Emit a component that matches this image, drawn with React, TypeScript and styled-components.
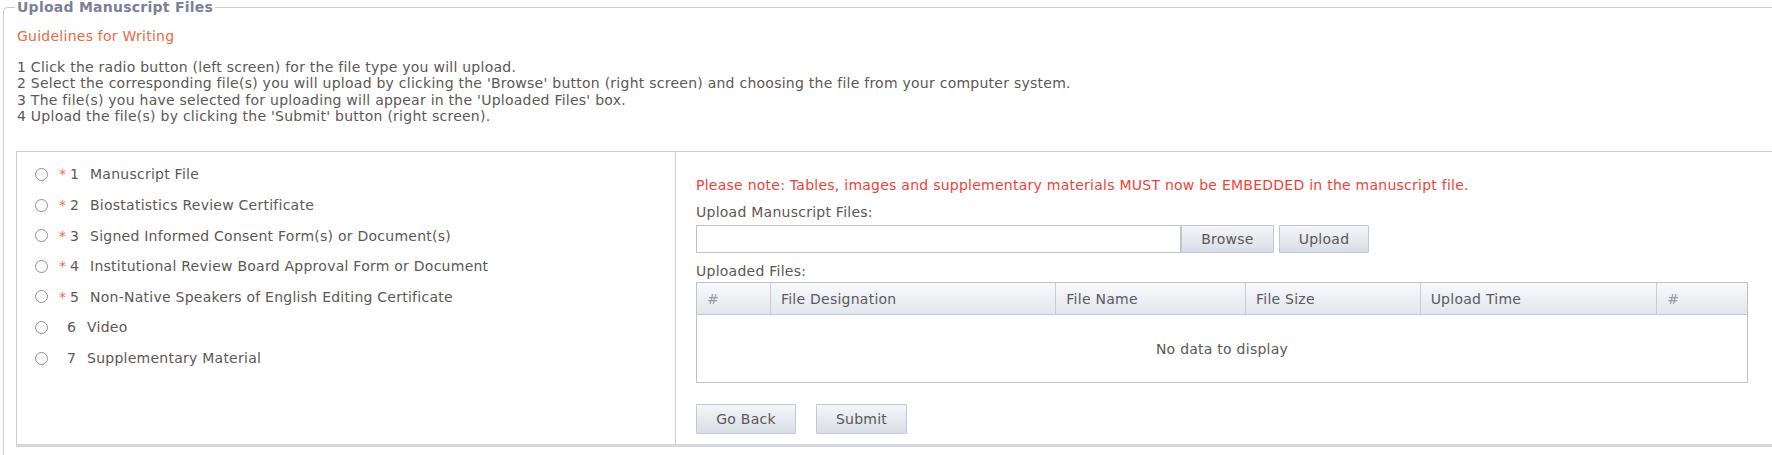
import React from 'react'
import styled, { createGlobalStyle } from 'styled-components'

const GlobalStyle = createGlobalStyle`
	html, body {
		margin: 0;
		padding: 0;
		background: #ffffff;
		overflow: hidden;
	}
	body {
		font-family: 'DejaVu Sans', Verdana, sans-serif;
		font-size: 14px;
		letter-spacing: 0.25px;
		color: #5b5755;
	}
`

const guidelines = [
	"1 Click the radio button (left screen) for the file type you will upload.",
	"2 Select the corresponding file(s) you will upload by clicking the 'Browse' button (right screen) and choosing the file from your computer system.",
	"3 The file(s) you have selected for uploading will appear in the 'Uploaded Files' box.",
	"4 Upload the file(s) by clicking the 'Submit' button (right screen).",
]

const fileTypes = [
	{ num: 1, label: 'Manuscript File', required: true },
	{ num: 2, label: 'Biostatistics Review Certificate', required: true },
	{ num: 3, label: 'Signed Informed Consent Form(s) or Document(s)', required: true },
	{ num: 4, label: 'Institutional Review Board Approval Form or Document', required: true },
	{ num: 5, label: 'Non-Native Speakers of English Editing Certificate', required: true },
	{ num: 6, label: 'Video', required: false },
	{ num: 7, label: 'Supplementary Material', required: false },
]

const columns = [
	{ title: '#', width: 74, muted: true },
	{ title: 'File Designation', width: 286 },
	{ title: 'File Name', width: 190 },
	{ title: 'File Size', width: 175 },
	{ title: 'Upload Time', width: 237 },
	{ title: '#', width: 90, muted: true },
]

export default function App() {
	return (
		<>
			<GlobalStyle />
			<Fieldset>
				<Legend>{'Upload Manuscript Files'}</Legend>
				<Guidelines>
					<GuideTitle>{'Guidelines for Writing'}</GuideTitle>
					<GuideList>
						{guidelines.map((line) => (
							<GuideLine key={line}>{line}</GuideLine>
						))}
					</GuideList>
				</Guidelines>
				<Panel>
					<LeftColumn>
						{fileTypes.map((item) => (
							<RadioRow key={item.num}>
								<Radio />
								<Star required={item.required}>{item.required ? '*' : ''}</Star>
								<Num>{item.num}</Num>
								<span>{item.label}</span>
							</RadioRow>
						))}
					</LeftColumn>
					<RightColumn>
						<Note>{'Please note: Tables, images and supplementary materials MUST now be EMBEDDED in the manuscript file.'}</Note>
						<Label space={5}>{'Upload Manuscript Files:'}</Label>
						<UploadRow>
							<FileInput />
							<Button w={93}>{'Browse'}</Button>
							<Button w={90}>{'Upload'}</Button>
						</UploadRow>
						<Label space={3}>{'Uploaded Files:'}</Label>
						<Table>
							<HeaderRow>
								{columns.map((col, i) => (
									<HeaderCell key={i} muted={!!col.muted} style={{ width: col.width }}>{col.title}</HeaderCell>
								))}
							</HeaderRow>
							<EmptyBody>{'No data to display'}</EmptyBody>
						</Table>
						<ActionRow>
							<Button w={100} h={30}>{'Go Back'}</Button>
							<Button w={91} h={30}>{'Submit'}</Button>
						</ActionRow>
					</RightColumn>
				</Panel>
			</Fieldset>
		</>
	)
}

const Fieldset = styled.fieldset`
	margin: 0 0 0 3px;
	padding: 0 0 8px 12px;
	width: 1800px;
	border: 1px solid #c9cad3;
	border-bottom: none;
	border-radius: 5px 0 0 0;
	min-width: 0;
	box-sizing: border-box;
`

const Legend = styled.legend`
	padding: 0 2px;
	margin-left: -1px;
	font-weight: bold;
	font-size: 14px;
	color: #7b7f98;
	line-height: 14px;
`

const Guidelines = styled.div`
	padding: 14px 0 0 1px;
`

const GuideTitle = styled.div`
	color: #ea6a43;
	line-height: 16px;
	margin-bottom: 15px;
`

const GuideList = styled.div`
	display: flex;
	flex-direction: column;
`

const GuideLine = styled.div`
	line-height: 16.3px;
	white-space: nowrap;
`

const Panel = styled.div`
	margin-top: 27px;
	display: flex;
	height: 292px;
	border: 1px solid #c9cad3;
	border-bottom: 3px solid #d6d7de;
	box-sizing: content-box;
`

const LeftColumn = styled.div`
	width: 659px;
	border-right: 1px solid #c9cad3;
	padding: 7px 0 0 18px;
	box-sizing: border-box;
	display: flex;
	flex-direction: column;
`

const RadioRow = styled.div`
	display: flex;
	align-items: center;
	height: 30.6px;
	white-space: nowrap;
`

const Radio = styled.span`
	width: 11px;
	height: 11px;
	border: 1px solid #8f8f8f;
	border-radius: 50%;
	background: #ffffff;
	margin-right: 11px;
	flex-shrink: 0;
`

const Star = styled.span<{ required: boolean }>`
	color: #f0674a;
	width: ${(props) => (props.required ? 11 : 8)}px;
	flex-shrink: 0;
`

const Num = styled.span`
	width: 20px;
	flex-shrink: 0;
`

const RightColumn = styled.div`
	padding: 25px 0 0 20px;
	display: flex;
	flex-direction: column;
`

const Note = styled.div`
	color: #ee4338;
	line-height: 16px;
	margin-bottom: 11px;
	white-space: nowrap;
`

const Label = styled.div<{ space: number }>`
	line-height: 16px;
	margin-bottom: ${(props) => props.space}px;
`

const UploadRow = styled.div`
	display: flex;
	align-items: center;
	margin-bottom: 10px;

	& > button:last-child {
		margin-left: 5px;
	}
`

const FileInput = styled.div`
	width: 485px;
	height: 28px;
	border: 1px solid #bfc2cb;
	box-sizing: border-box;
	background: #ffffff;
`

const Button = styled.button<{ w: number, h?: number }>`
	width: ${(props) => props.w}px;
	height: ${(props) => props.h || 28}px;
	font-family: 'DejaVu Sans', Verdana, sans-serif;
	font-size: 14px;
	letter-spacing: 0.25px;
	color: #5b5755;
	background: linear-gradient(#f5f6f9, #d9dde6);
	border: 1px solid #c3c7d1;
	border-radius: 1px;
	padding: 0;
	box-sizing: border-box;
`

const Table = styled.div`
	width: 1052px;
	border: 1px solid #bfc2cb;
	box-sizing: border-box;
`

const HeaderRow = styled.div`
	display: flex;
	height: 31px;
	background: linear-gradient(#f8f9fb, #e3e6ed);
	border-bottom: 1px solid #c3c7d1;
`

const HeaderCell = styled.div<{ muted: boolean }>`
	display: flex;
	align-items: center;
	padding-left: 10px;
	box-sizing: border-box;
	border-right: 1px solid #c9ccd4;
	color: ${(props) => (props.muted ? '#9a9aa2' : '#5a5a64')};

	&:last-child {
		border-right: none;
	}
`

const EmptyBody = styled.div`
	height: 67px;
	display: flex;
	align-items: center;
	justify-content: center;
`

const ActionRow = styled.div`
	display: flex;
	gap: 20px;
	margin-top: 21px;
`
